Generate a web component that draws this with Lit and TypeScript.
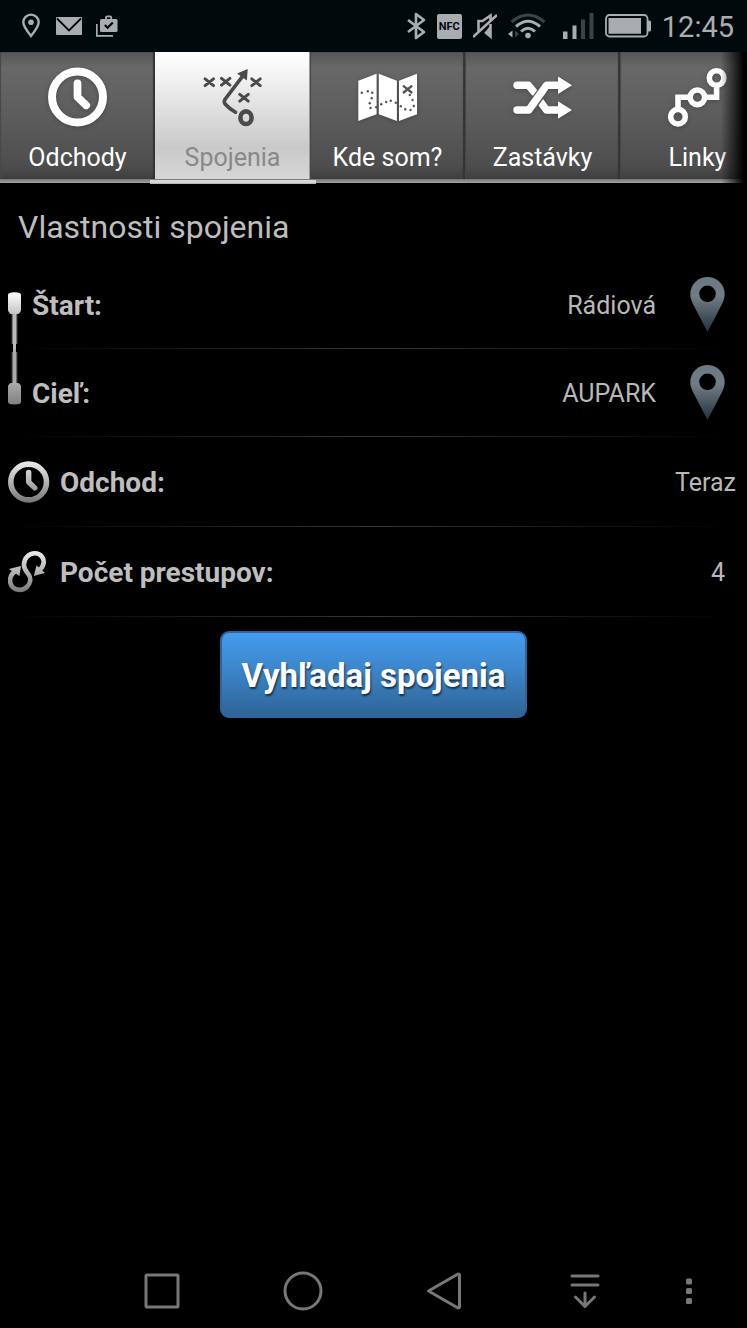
import { LitElement, html, svg, css } from "lit";
import { customElement, state } from "lit/decorators.js";
import { classMap } from "lit/directives/class-map.js";

const cross = (x: number, y: number, r: number) =>
  `M${x - r} ${y - r * 0.8}L${x + r} ${y + r * 0.8}M${x + r} ${y - r * 0.8}L${x - r} ${y + r * 0.8}`;

const mapDots: [number, number][] = [
  [3.8, 25.7], [9.8, 24.3], [14.2, 25.7], [13.8, 31.3], [11.8, 36.3], [12.5, 41],
  [18.2, 40.3], [23.2, 37.3], [28.2, 35], [32.8, 33.7], [37.8, 35.7], [42.8, 39.3],
  [47.2, 42.3], [52.5, 43], [55.8, 39], [54.5, 33], [51.8, 28],
];

const clockShape = svg`
  <circle cx="29.500" cy="30" r="25.500" stroke-width="8"/>
  <path d="M29.500 16.500V30L38.200 38.400" stroke-width="7.800" stroke-linecap="round" stroke-linejoin="round"/>`;

const tabs = [
  { id: "departures", label: "Odchody", icon: svg`<g fill="none" stroke="currentColor">${clockShape}</g>` },
  {
    id: "connections",
    label: "Spojenia",
    icon: svg`
      <g fill="none" stroke="currentColor" stroke-linecap="round">
        <path stroke-width="3" d="${cross(6.3, 15.3, 4.2)}${cross(22.7, 14.7, 4.2)}${cross(53, 15.3, 4.2)}${cross(41, 30.7, 4.2)}"/>
        <path stroke-width="3.600" d="M39.700 9.200L22.100 32.200Q20.500 34.800 22.100 37Q25.500 41 32.500 45.200"/>
        <ellipse cx="43" cy="50.700" rx="5.600" ry="6.300" stroke-width="4.600"/>
      </g>
      <path fill="currentColor" d="M44.700 2L34.100 6.400L43.900 13.400Z"/>`,
  },
  {
    id: "where",
    label: "Kde som?",
    icon: svg`
      <path fill="currentColor" d="M.3 13.700L18.600 6.700V47.300L.3 54ZM20.800 6.700L38.900 13.700V54L20.800 47.300ZM41 13.700L59 6.700V47.300L41 54Z"/>
      <g fill="#555">${mapDots.map(([x, y]) => svg`<circle cx=${x} cy=${y} r="1.2"/>`)}</g>
      <path fill="none" stroke="#555" stroke-width="2.4" d="${cross(49.6, 22.3, 4.6)}"/>`,
  },
  {
    id: "stops",
    label: "Zastávky",
    icon: svg`
      <g fill="none" stroke="currentColor" stroke-width="7.400" stroke-linejoin="round">
        <path stroke-linecap="round" d="M4 18.300H15.500L21 25"/>
        <path d="M26.500 33.500L33.500 43H46"/>
        <path stroke="#5c5c5c" stroke-width="10" d="M19 39L30 23.500"/>
        <path stroke-linecap="round" d="M4 43H15.800L33.500 18.300H46"/>
      </g>
      <path fill="currentColor" d="M45 9.500L59 18.300L45 27ZM45 34.200L59 43L45 51.800Z"/>`,
  },
  {
    id: "lines",
    label: "Linky",
    icon: svg`
      <g fill="none" stroke="currentColor" stroke-width="5.600">
        <circle cx="10" cy="49.700" r="7.300"/><circle cx="29.400" cy="30.300" r="7.300"/><circle cx="48.600" cy="11" r="7.300"/>
        <path d="M10 42.500V30.300H22.500M36.500 30.300H48.600V18"/>
      </g>`,
  },
];

@customElement("status-bar")
class StatusBar extends LitElement {
  static styles = css`
    :host { display: flex; align-items: center; justify-content: space-between; height: 52px;
      padding: 0 13px 0 21px; background: #02090c; color: #a9adb0; box-sizing: border-box; }
    .group { display: flex; align-items: center; gap: 14px; }
    .system { gap: 11px; }
    svg { display: block; flex: none; }
    .nfc { width: 25px; height: 25px; background: #a9adb0; color: #02090c; border-radius: 2px; text-align: center;
      font: 700 11px/25px "Liberation Sans Narrow", "Roboto", sans-serif; }
    .time { padding-top: 2px; font-size: 29px; line-height: 50px; }
  `;
  render() {
    return html`
      <div class="group">
        <svg width="20" height="26" viewBox="0 0 20 26" fill="none" stroke="currentColor" stroke-width="2.4">
          <path d="M10 23C6 18 2.300 13.500 2.300 9.300A7.700 7.700 0 0 1 17.700 9.300C17.700 13.500 14 18 10 23Z"/>
          <circle cx="10" cy="9.300" r="2.800" fill="currentColor" stroke="none"/>
        </svg>
        <svg width="27" height="26" viewBox="0 0 27 26">
          <rect x="1" y="4" width="26" height="18" rx="1" fill="currentColor"/>
          <path d="M2 5.500L14 17.500L26 5.500" fill="none" stroke="#02090c" stroke-width="1.800"/>
        </svg>
        <svg width="22" height="26" viewBox="0 0 22 26" fill="none" stroke="currentColor">
          <path d="M.8 11V22.800H17" stroke-width="1.700"/>
          <rect x="4" y="6" width="17.500" height="13" rx="1.500" fill="currentColor" stroke="none"/>
          <path d="M10 6V4.500Q10 3.300 11.200 3.300H14Q15.200 3.300 15.200 4.500V6" stroke-width="1.800"/>
          <path d="M8.800 12L11.600 14.800L16.800 9.500" stroke="#02090c" stroke-width="2.200"/>
        </svg>
      </div>
      <div class="group system">
        <svg width="19" height="28" viewBox="0 0 19 28" fill="none" stroke="currentColor" stroke-width="2.700" stroke-linejoin="round">
          <path d="M1 8L17 20L9 26V2L17 8L1 20"/>
        </svg>
        <span class="nfc">NFC</span>
        <svg width="24" height="28" viewBox="0 0 24 28" fill="none" stroke="currentColor" stroke-width="2.600">
          <path d="M5.500 19.500V9H9.500L17.500 3.500V8"/><path d="M12 20L17.500 24.500V12"/>
          <path d="M14.500 17L18 13V25L12.500 20Z" fill="currentColor" stroke="none"/>
          <path d="M0 25L24 3"/>
        </svg>
        <svg width="38" height="28" viewBox="0 0 38 28" fill="none" stroke-width="3">
          <path d="M3.500 10Q20 -4 36.500 10" stroke="#3c4346"/>
          <path d="M8 14.500Q20 4 32 14.500M13 19.500Q20 13 27 19.500" stroke="currentColor"/>
          <circle cx="20" cy="23.500" r="2.800" fill="currentColor"/>
          <path d="M0 22L4.500 18.500V25.500Z" fill="currentColor"/><path d="M11 22L7 18.500V25.500Z" fill="#3c4346"/>
        </svg>
        <svg width="37" height="28" viewBox="0 0 37 28">
          <path fill="currentColor" d="M6 19.500h4.500V27H6zM15.500 13.500h4V27h-4z"/>
          <path fill="#3c4346" d="M24 7.500h4V27h-4zM32.500 1h4v26h-4z"/>
        </svg>
        <svg width="46" height="26" viewBox="0 0 46 26">
          <rect x="1" y="2" width="41.500" height="21.500" rx="3.500" fill="none" stroke="currentColor" stroke-width="1.800"/>
          <path fill="currentColor" d="M3.500 5H36V20.800H3.500ZM43 7.500H44.500Q46 7.500 46 9V17Q46 18.500 44.500 18.500H43Z"/>
        </svg>
        <time class="time">12:45</time>
      </div>`;
  }
}

@customElement("tab-strip")
class TabStrip extends LitElement {
  @state() active = "connections";
  static styles = css`
    :host { display: block; position: relative; overflow: hidden; }
    :host::after { content: ""; position: absolute; inset: 0 0 0 auto; width: 26px; pointer-events: none;
      background: linear-gradient(90deg, transparent, #000 88%); }
    .strip { display: flex; height: 132px; box-sizing: border-box; padding-bottom: 5px; position: relative; }
    .strip::after { content: ""; position: absolute; left: 0; right: 0; bottom: 1px; height: 4px; background: linear-gradient(#777, #a2a2a2); }
    .tab { flex: none; width: 155px; height: 127px; position: relative; display: flex; flex-direction: column; align-items: center;
      gap: 13px; border: 0; margin: 0; padding: 15px 0 0; color: #fff; font: inherit; font-size: 25px; line-height: 36px;
      background: linear-gradient(#555, #686868 12%, #5b5b5b 55%, #4d4d4d 90%, #3e3e3e);
      box-shadow: inset -2px 0 1px #333, inset 1px 0 1px #484848; }
    .icon { width: 60px; height: 60px; flex: none; filter: drop-shadow(0 1px 2px #3338); }
    .active { z-index: 1; color: #888; background: linear-gradient(#fff, #f2f2f2 20%, #c9c9c9 75%, #d6d6d6); box-shadow: inset -1px 0 #999; }
    .active .icon { color: #4a4a4a; filter: none; }
    .active::after { content: ""; position: absolute; left: -5px; right: -6px; bottom: -5px; height: 4px; background: linear-gradient(#d8d8d8 60%, #aaa); }
  `;
  render() {
    return html`<div class="strip" role="tablist">
      ${tabs.map((t) => html`
        <button class=${classMap({ tab: true, active: t.id === this.active })} role="tab"
          aria-selected=${t.id === this.active} @click=${() => (this.active = t.id)}>
          <svg class="icon" viewBox="0 0 60 60">${t.icon}</svg>
          <span>${t.label}</span>
        </button>`)}
    </div>`;
  }
}

const silver = svg`<linearGradient id="silver" gradientUnits="userSpaceOnUse" x1="0" y1="0" x2="0" y2="42">
  <stop offset="0" stop-color="#eee"/><stop offset="1" stop-color="#777"/></linearGradient>`;

const pin = html`<svg width="35" height="55" viewBox="0 0 35 55" aria-hidden="true">
  <defs><linearGradient id="pin" x1="0" y1="0" x2="0" y2="1">
    <stop offset="0" stop-color="#6d7883"/><stop offset=".35" stop-color="#727c86"/><stop offset="1" stop-color="#22313c"/></linearGradient></defs>
  <path fill="url(#pin)" fill-rule="evenodd" d="M17.500 55L2.200 25.500Q.3 21.500 .3 17.200A17.200 17.200 0 0 1 34.700 17.200Q34.700 21.500 32.800 25.500ZM17.500 8.500a8.300 8.300 0 1 0 0 16.600a8.300 8.300 0 1 0 0-16.600Z"/>
</svg>`;

@customElement("connection-form")
class ConnectionForm extends LitElement {
  static styles = css`
    :host { display: block; color: #bebebe; }
    .title { margin: 0; padding: 18px 18px 9px; font-size: 32px; line-height: 50px; font-weight: 400; }
    .row { display: flex; align-items: center; gap: 10px; height: 88px; padding: 0 22px 0 8px;
      background: linear-gradient(90deg, transparent 1%, #363636 50%, transparent 98%) bottom / 100% 1px no-repeat; }
    .tall { height: 90px; }
    .flush { padding-right: 11px; }
    svg { display: block; flex: none; }
    label { flex: none; padding-top: 2px; font-size: 28px; line-height: 36px; font-weight: 700; }
    .value { flex: 1; min-width: 0; width: 0; margin: 0; padding: 2px 0 0; border: 0; background: none; color: #b8b8b8; appearance: none;
      font: inherit; font-size: 25px; line-height: 36px; text-align: right; text-align-last: right; }
    .pick { flex: none; margin: 0 0 2px 24px; padding: 0; border: 0; background: none; }
    .actions { display: flex; justify-content: center; padding: 14px 0; }
    .search { height: 87px; padding: 2px 20px 0; border: 2px solid #2b659c; border-radius: 9px; color: #fff; font: inherit; font-size: 33px; font-weight: 700;
      line-height: 40px; text-shadow: 1px 2px 2px #0009; background: linear-gradient(#459bee, #3f8dd6 30%, #2f6496); }
  `;
  render() {
    return html`
      <h1 class="title">Vlastnosti spojenia</h1>
      <form @submit=${(e: Event) => e.preventDefault()}>
        <div class="row">
          <svg width="14" height="88" viewBox="0 0 14 88" aria-hidden="true">
            <defs><linearGradient id="top" x1="0" y1="0" x2="0" y2="1"><stop offset="0" stop-color="#fff"/><stop offset="1" stop-color="#c4c4c4"/></linearGradient></defs>
            <path fill="#777" d="M3.700 51h5.600v32H3.700z"/><path fill="#bbb" d="M5 51h3v37H5z"/>
            <path fill="url(#top)" d="M0 34Q0 31.300 6.500 31.300T13 34V49Q13 51 10.500 53H2.500Q0 51 0 49Z"/>
          </svg>
          <label for="from">Štart:</label>
          <input class="value" id="from" type="text" value="Rádiová">
          <button class="pick" type="button" aria-label="Štart">${pin}</button>
        </div>
        <div class="row">
          <svg width="14" height="88" viewBox="0 0 14 88" aria-hidden="true">
            <defs><linearGradient id="end" x1="0" y1="0" x2="0" y2="1"><stop offset="0" stop-color="#aaa"/><stop offset="1" stop-color="#808080"/></linearGradient></defs>
            <path fill="#666" d="M3.700 3h5.600v33H3.700z"/><path fill="#aaa" d="M5 0h3v36H5z"/>
            <path fill="url(#end)" d="M0 37Q0 36 2.500 34H10.500Q13 36 13 37V53Q13 55.500 6.500 55.500T0 53Z"/>
          </svg>
          <label for="to">Cieľ:</label>
          <input class="value" id="to" type="text" value="AUPARK">
          <button class="pick" type="button" aria-label="Cieľ">${pin}</button>
        </div>
        <div class="row tall flush">
          <svg width="42" height="42" viewBox="0 0 60 60" aria-hidden="true">
            <defs><linearGradient id="dial" gradientUnits="userSpaceOnUse" x1="0" y1="0" x2="0" y2="60"><stop offset="0" stop-color="#eee"/><stop offset="1" stop-color="#777"/></linearGradient></defs>
            <g fill="none" stroke="url(#dial)">${clockShape}</g>
          </svg>
          <label for="when">Odchod:</label>
          <button class="value" id="when" type="button">Teraz</button>
        </div>
        <div class="row tall">
          <svg width="42" height="42" viewBox="0 0 42 42" aria-hidden="true">
            <defs>${silver}</defs>
            <path fill="none" stroke="url(#silver)" stroke-width="4.600" d="M7 20.500C1 24.500 .8 32 4.500 36C8 39.800 15 39.800 18.800 36C22.500 32.300 23.300 27.500 20.800 23.800C19 21 16.300 18.500 16 14.500C15.600 7 21 2.300 27 2.300C32.500 2.300 36 6.800 35.700 11.500C35.500 14.500 34 17 31 19.500"/>
            <path fill="url(#silver)" d="M.8 18L13 15L11.500 25ZM25.800 25L37 22L28.500 14.500Z"/>
          </svg>
          <label for="transfers">Počet prestupov:</label>
          <select class="value" id="transfers">
            ${[0, 1, 2, 3, 4, 5].map((n) => html`<option ?selected=${n === 4}>${n}</option>`)}
          </select>
        </div>
        <div class="actions"><button class="search" type="submit">Vyhľadaj spojenia</button></div>
      </form>`;
  }
}

@customElement("nav-bar")
class NavBar extends LitElement {
  static styles = css`
    :host { display: grid; grid-template-columns: 141fr 141fr 141fr 141fr 66fr; height: 74px; padding: 0 25px 0 12.2%; }
    button { display: grid; place-items: center; border: 0; margin: 0; padding: 0; background: none; color: #777; }
    svg { display: block; fill: none; stroke: currentColor; stroke-width: 3; stroke-linejoin: round; stroke-linecap: round; }
    .dots { fill: currentColor; stroke: none; }
  `;
  render() {
    return html`
      <button aria-label="Prehľad"><svg width="40" height="40" viewBox="0 0 40 40"><rect x="4" y="4" width="32" height="32" rx="1"/></svg></button>
      <button aria-label="Domov"><svg width="40" height="40" viewBox="0 0 40 40"><circle cx="20" cy="20" r="18"/></svg></button>
      <button aria-label="Späť"><svg width="40" height="40" viewBox="0 0 40 40"><path d="M4.500 20L34 3Q35.500 3 35.500 4.500V35.500Q35.500 37 34 37Z"/></svg></button>
      <button aria-label="Skryť"><svg width="40" height="40" viewBox="0 0 40 40"><path d="M7 5H33M7 14H33M20 22V35M10.500 26L20 35.500L29.500 26"/></svg></button>
      <button aria-label="Viac"><svg class="dots" width="40" height="40" viewBox="0 0 40 40"><rect x="17" y="7.500" width="6" height="6" rx="1.500"/><rect x="17" y="17" width="6" height="6" rx="1.500"/><rect x="17" y="27" width="6" height="6" rx="1.500"/></svg></button>`;
  }
}

@customElement("app-root")
class AppRoot extends LitElement {
  static styles = css`
    :host { display: flex; flex-direction: column; min-height: 100vh; background: #000; font-family: "Roboto", sans-serif; }
    .content { flex: 1; }
  `;
  render() {
    return html`
      <status-bar></status-bar>
      <tab-strip></tab-strip>
      <connection-form class="content"></connection-form>
      <nav-bar></nav-bar>`;
  }
}
